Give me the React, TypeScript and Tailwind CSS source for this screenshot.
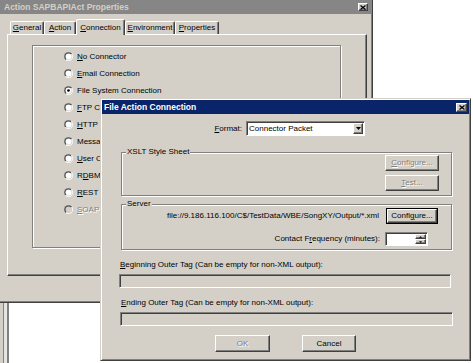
import React from "react";

const raised =
  "border border-t-white border-l-white border-b-[#404040] border-r-[#404040] shadow-[inset_-1px_-1px_0_#808080]";
const sunken =
  "border border-t-[#808080] border-l-[#808080] border-b-white border-r-white shadow-[inset_1px_1px_0_#404040]";
const etched = "border border-[#808080] shadow-[inset_1px_1px_0_#fff,1px_1px_0_#fff]";
const disabledText = "text-[#808080] [text-shadow:1px_1px_0_#fff]";

function Radio({ checked = false, disabled = false }: { checked?: boolean; disabled?: boolean }) {
  return (
    <svg width="9" height="9" viewBox="0 0 12 12" className="shrink-0">
      <defs>
        <linearGradient id="rgA" x1="0" y1="0" x2="1" y2="1">
          <stop offset="0.5" stopColor="#808080" />
          <stop offset="0.5" stopColor="#ffffff" />
        </linearGradient>
        <linearGradient id="rgB" x1="0" y1="0" x2="1" y2="1">
          <stop offset="0.5" stopColor="#404040" />
          <stop offset="0.5" stopColor="#d4d0c8" />
        </linearGradient>
      </defs>
      <circle cx="6" cy="6" r="6" fill="url(#rgA)" />
      <circle cx="6" cy="6" r="5" fill="url(#rgB)" />
      <circle cx="6" cy="6" r="4" fill={disabled ? "#d4d0c8" : "#ffffff"} />
      {checked && <circle cx="6" cy="6" r="1.8" fill="#000" />}
    </svg>
  );
}

function CloseBtn({ className }: { className: string }) {
  return (
    <div className={`${className} bg-[#d4d0c8] ${raised} flex items-center justify-center`}>
      <svg width="6" height="5" viewBox="0 0 6 5">
        <path d="M0.5 0.5 L5.5 4.5 M5.5 0.5 L0.5 4.5" stroke="#000" strokeWidth="1.3" />
      </svg>
    </div>
  );
}

function Btn({
  children,
  className,
  disabled = false,
  isDefault = false,
}: {
  children: React.ReactNode;
  className: string;
  disabled?: boolean;
  isDefault?: boolean;
}) {
  return (
    <div className={`${className} bg-[#d4d0c8] ${isDefault ? "border border-black" : ""}`}>
      <div
        className={`h-full w-full ${raised} flex items-center justify-center leading-none ${
          disabled ? disabledText : "text-black"
        }`}
      >
        {children}
      </div>
    </div>
  );
}

function Tab({
  children,
  className,
  selected = false,
}: {
  children: React.ReactNode;
  className: string;
  selected?: boolean;
}) {
  return (
    <div
      className={`${className} ${
        selected ? "h-[16px] -mb-px relative z-10" : "h-[13px]"
      } bg-[#d4d0c8] border-t border-l border-r border-t-white border-l-white border-r-[#404040] rounded-t-[2px] shadow-[inset_-1px_0_0_#808080] flex items-center justify-center text-[8px] leading-none`}
    >
      {children}
    </div>
  );
}

function RadioRow({
  children,
  checked,
  disabled,
}: {
  children: React.ReactNode;
  checked?: boolean;
  disabled?: boolean;
}) {
  return (
    <div className="h-[17px] flex items-center gap-[4px]">
      <Radio checked={checked} disabled={disabled} />
      <span className={`whitespace-nowrap leading-none ${disabled ? disabledText : ""}`}>{children}</span>
    </div>
  );
}

export default function App() {
  return (
    <div className="relative w-[473px] h-[363px] overflow-hidden bg-white text-black text-[8px] font-['Liberation_Sans',Arial,sans-serif]">
      {/* window edge below the back window */}
      <div className="absolute left-0 top-[303px] h-[60px] flex">
        <div className="w-[3px] bg-[#d4d0c8]" />
        <div className="w-px bg-[#808080]" />
        <div className="w-[3px] bg-[#e4e4e4]" />
        <div className="w-[2px] bg-[#808080]" />
      </div>

      {/* Back window */}
      <div className="absolute left-0 top-0 w-[373px] h-[303px] bg-[#d4d0c8] border-r border-b border-r-[#404040] border-b-[#404040] shadow-[inset_-1px_-1px_0_#808080] flex flex-col">
        <div className="h-[14px] bg-[#868686] flex items-center justify-between pl-[4px] pr-[4px]">
          <span className="text-[8.5px] font-bold text-[#d4d0c8] leading-none whitespace-nowrap">
            Action SAPBAPIAct Properties
          </span>
          <CloseBtn className="w-[10px] h-[8px]" />
        </div>
        <div className="mt-[5px] h-[15px] pl-[10px] flex items-end">
          <Tab className="w-[34px]">
            <span>
              <u>G</u>eneral
            </span>
          </Tab>
          <Tab className="w-[32px]">
            <span>
              <u>A</u>ction
            </span>
          </Tab>
          <Tab className="w-[49px]" selected>
            <span>
              <u>C</u>onnection
            </span>
          </Tab>
          <Tab className="w-[50px]">
            <span>
              <u>E</u>nvironment
            </span>
          </Tab>
          <Tab className="w-[44px]">
            <span>
              <u>P</u>roperties
            </span>
          </Tab>
        </div>
        <div className={`ml-[7px] w-[360px] h-[242px] ${raised}`}>
          <div className={`ml-[24px] mt-[10px] w-[309px] h-[203px] ${etched} flex flex-col pl-[31px] pt-[2px]`}>
            <RadioRow>
              <u>N</u>o Connector
            </RadioRow>
            <RadioRow>
              <u>E</u>mail Connection
            </RadioRow>
            <RadioRow checked>File System Connection</RadioRow>
            <RadioRow>
              <u>F</u>TP Connection
            </RadioRow>
            <RadioRow>
              <u>H</u>TTP Connection
            </RadioRow>
            <RadioRow>Message Queue Connection</RadioRow>
            <RadioRow>
              <u>U</u>ser Connection
            </RadioRow>
            <RadioRow>
              R<u>D</u>BMS Connection
            </RadioRow>
            <RadioRow>
              <u>R</u>EST Connection
            </RadioRow>
            <RadioRow disabled>
              <u>S</u>OAP Connection
            </RadioRow>
          </div>
        </div>
      </div>

      {/* Front dialog */}
      <div className="absolute left-[100px] top-[98px] w-[371px] h-[263px] bg-[#d4d0c8] border border-t-[#d4d0c8] border-l-[#d4d0c8] border-b-[#404040] border-r-[#404040] shadow-[inset_1px_1px_0_#fff,inset_-1px_-1px_0_#808080] p-px flex flex-col">
        <div className="h-[14px] shrink-0 bg-[#0a246a] flex items-center justify-between pl-[2px] pr-[2px]">
          <span className="text-[8.5px] font-bold text-white leading-none whitespace-nowrap">
            File Action Connection
          </span>
          <CloseBtn className="w-[11px] h-[9px]" />
        </div>
        <div className="flex flex-col pl-[19px] pr-[17px] leading-[10px]">
          {/* Format row */}
          <div className="mt-[7px] h-[15px] flex items-center">
            <span className="w-[121px] text-right whitespace-nowrap">
              <u>F</u>ormat:
            </span>
            <div className={`ml-[4px] w-[119px] h-[15px] bg-white ${sunken} flex items-center justify-between pl-[2px] pr-px`}>
              <span className="whitespace-nowrap">Connector Packet</span>
              <div className={`w-[10px] h-[11px] bg-[#d4d0c8] ${raised} flex items-center justify-center`}>
                <svg width="5" height="3" viewBox="0 0 5 3">
                  <path d="M0 0 H5 L2.5 3 Z" fill="#000" />
                </svg>
              </div>
            </div>
          </div>

          {/* XSLT group */}
          <div className={`relative mt-[16px] w-[331px] h-[44px] ${etched} flex flex-col items-end pr-[12px] pt-[2px] gap-[4px]`}>
            <span className="absolute left-[4px] top-[-6px] px-px bg-[#d4d0c8] whitespace-nowrap">
              XSLT Style Sheet
            </span>
            <Btn className="w-[54px] h-[16px]" disabled>
              <span>
                <u>C</u>onfigure...
              </span>
            </Btn>
            <Btn className="w-[54px] h-[16px]" disabled>
              <span>
                <u>T</u>est...
              </span>
            </Btn>
          </div>

          {/* Server group */}
          <div className={`relative mt-[8px] w-[331px] h-[46px] ${etched} flex flex-col pt-[3px]`}>
            <span className="absolute left-[4px] top-[-6px] px-px bg-[#d4d0c8] whitespace-nowrap">Server</span>
            <div className="flex items-center justify-end gap-[7px] pr-[13px]">
              <span className="whitespace-nowrap">file://9.186.116.100/C$/TestData/WBE/SongXY/Output/*.xml</span>
              <Btn className="w-[52px] h-[16px]" isDefault>
                <span>
                  Confi<u>g</u>ure...
                </span>
              </Btn>
            </div>
            <div className="mt-[8px] flex items-center justify-end gap-[5px] pr-[23px]">
              <span className="whitespace-nowrap">
                Contact F<u>r</u>equency (minutes):
              </span>
              <div className={`w-[43px] h-[14px] bg-white ${sunken} flex justify-end p-px`}>
                <div className="w-[11px] flex flex-col">
                  <div className={`flex-1 bg-[#d4d0c8] ${raised} flex items-center justify-center`}>
                    <svg width="3" height="2" viewBox="0 0 4 2">
                      <path d="M0 2 H4 L2 0 Z" fill="#000" />
                    </svg>
                  </div>
                  <div className={`flex-1 bg-[#d4d0c8] ${raised} flex items-center justify-center`}>
                    <svg width="3" height="2" viewBox="0 0 4 2">
                      <path d="M0 0 H4 L2 2 Z" fill="#000" />
                    </svg>
                  </div>
                </div>
              </div>
            </div>
          </div>

          {/* Beginning outer tag */}
          <span className="mt-[10px] -ml-px whitespace-nowrap">
            <u>B</u>eginning Outer Tag (Can be empty for non-XML output):
          </span>
          <div className={`mt-[4px] -ml-[2px] w-[332px] h-[14px] bg-[#d4d0c8] ${sunken}`} />

          {/* Ending outer tag */}
          <span className="mt-[10px] whitespace-nowrap">
            <u>E</u>nding Outer Tag (Can be empty for non-XML output):
          </span>
          <div className={`mt-[4px] -ml-px w-[333px] h-[14px] bg-[#d4d0c8] ${sunken}`} />

          {/* Buttons */}
          <div className="mt-[9px] flex justify-center gap-[32px] pr-[2px]">
            <Btn className="w-[55px] h-[17px]" disabled>
              OK
            </Btn>
            <Btn className="w-[54px] h-[17px]">Cancel</Btn>
          </div>
        </div>
      </div>
    </div>
  );
}
